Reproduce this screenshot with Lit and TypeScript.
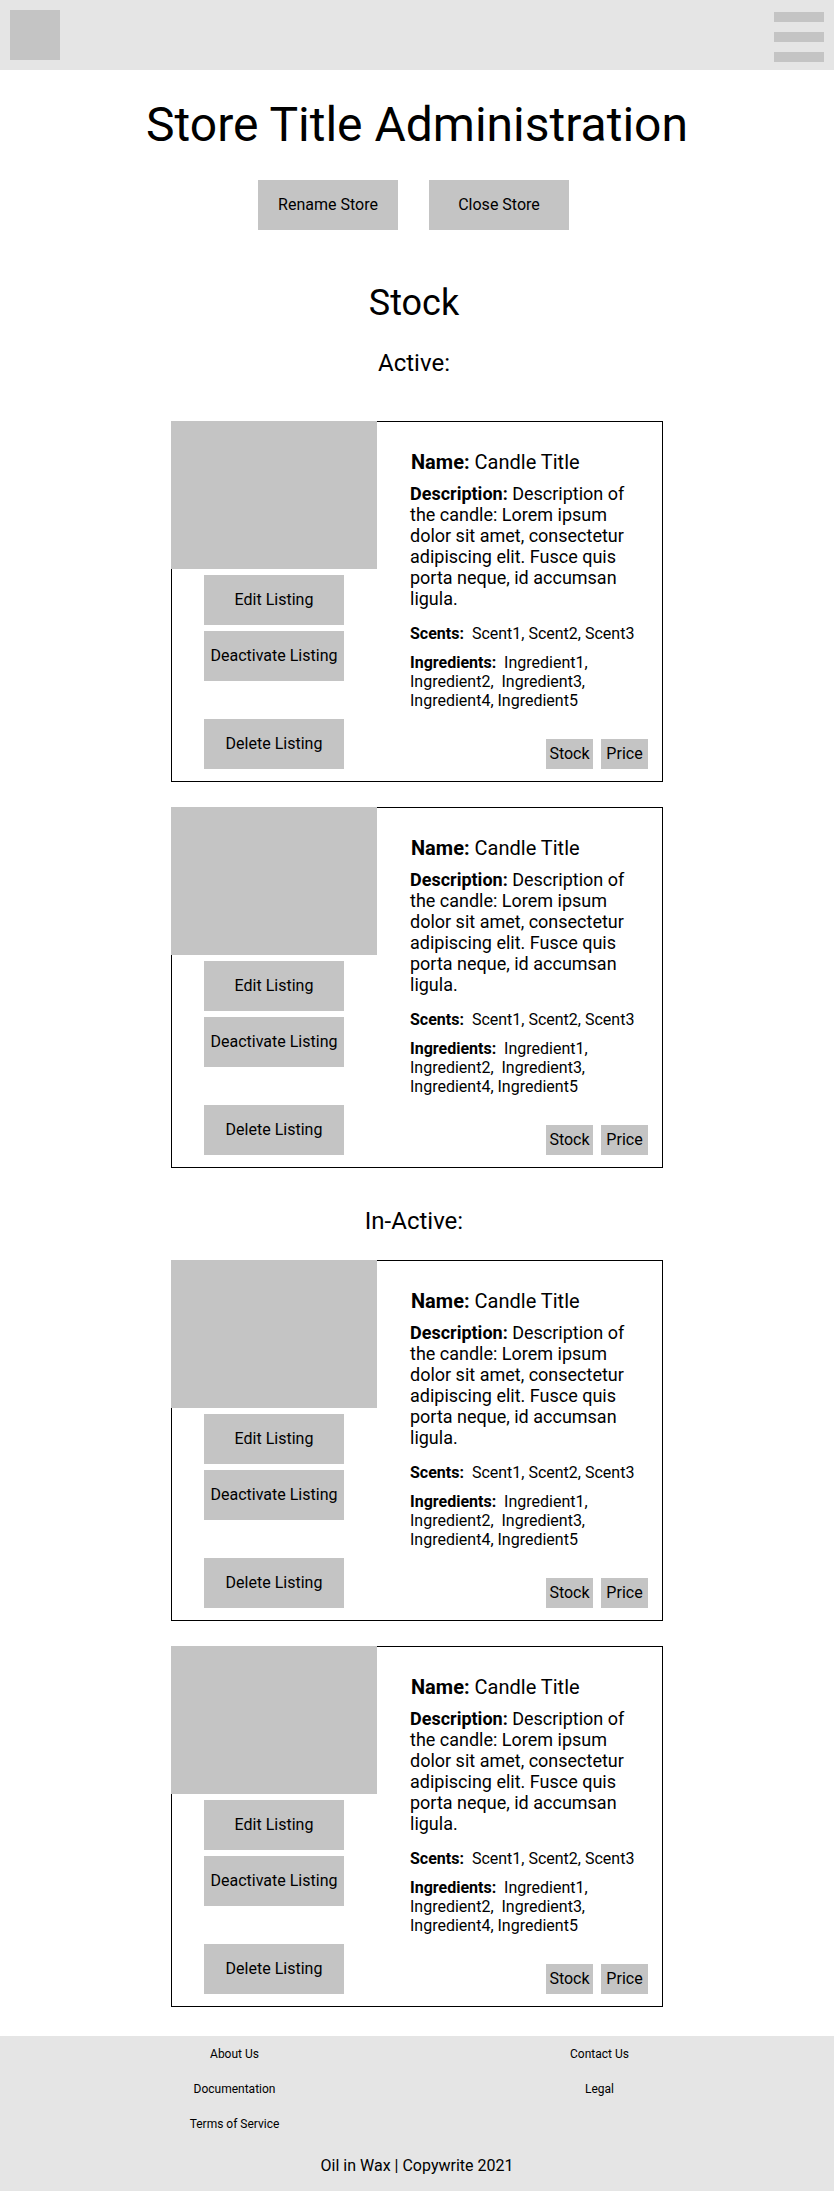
import { LitElement, html, css } from "lit";
import { customElement, property } from "lit/decorators.js";

interface Candle {
  name: string;
  description: string;
  scents: string;
  ingredients: string;
}

const candle: Candle = {
  name: "Candle Title",
  description:
    "Description of the candle: Lorem ipsum dolor sit amet, consectetur adipiscing elit. Fusce quis porta neque, id accumsan ligula.",
  scents: "Scent1, Scent2, Scent3",
  ingredients: "Ingredient1, Ingredient2, \u00a0Ingredient3, Ingredient4, Ingredient5",
};

const activeListings: Candle[] = [candle, candle];
const inactiveListings: Candle[] = [candle, candle];

const buttonStyles = css`
  .button {
    width: 140px;
    height: 50px;
    padding: 0 0 2px;
    border: 0;
    border-radius: 0;
    background: #c4c4c4;
    color: #000;
    font: 16px/19px Roboto, sans-serif;
    white-space: nowrap;
    cursor: pointer;
  }
`;

@customElement("listing-card")
class ListingCard extends LitElement {
  @property({ attribute: false }) candle!: Candle;

  static styles = [
    buttonStyles,
    css`
      :host {
        display: block;
      }
      .card {
        display: grid;
        grid-template-columns: 205px minmax(0, 1fr);
        border: 1px solid #000;
      }
      .side {
        display: flex;
        flex-direction: column;
        align-items: center;
        gap: 6px;
        padding-bottom: 12px;
      }
      .photo {
        align-self: stretch;
        height: 148px;
        margin: -1px 0 0 -1px;
        background: #c4c4c4;
      }
      .side .button {
        margin-right: 1px;
      }
      .side .delete {
        margin-top: 32px;
      }
      .details {
        display: flex;
        flex-direction: column;
        padding: 29px 14px 12px 33px;
      }
      .name,
      .text {
        margin: 0;
        font-weight: 400;
      }
      .name {
        padding-left: 1px;
        font-size: 20px;
        line-height: 23px;
      }
      .description {
        margin-top: 9px;
        font-size: 18px;
        line-height: 21px;
      }
      .scents {
        margin-top: 15px;
      }
      .ingredients {
        margin-top: 10px;
      }
      .tags {
        display: flex;
        justify-content: flex-end;
        gap: 8px;
        margin-top: auto;
      }
      .tag {
        width: 47px;
        line-height: 30px;
        text-align: center;
        background: #c4c4c4;
      }
    `,
  ];

  render() {
    const c = this.candle;
    return html`
      <article class="card">
        <div class="side">
          <div class="photo"></div>
          <button class="button" type="button">Edit Listing</button>
          <button class="button" type="button">Deactivate Listing</button>
          <button class="button delete" type="button">Delete Listing</button>
        </div>
        <div class="details">
          <h4 class="name"><b>Name:</b> ${c.name}</h4>
          <p class="text description"><b>Description:</b> ${c.description}</p>
          <p class="text scents"><b>Scents:</b>&nbsp; ${c.scents}</p>
          <p class="text ingredients"><b>Ingredients:</b>&nbsp; ${c.ingredients}</p>
          <div class="tags">
            <span class="tag">Stock</span>
            <span class="tag">Price</span>
          </div>
        </div>
      </article>
    `;
  }
}

@customElement("app-root")
class AppRoot extends LitElement {
  static styles = [
    buttonStyles,
    css`
      :host {
        display: block;
        background: #fff;
        color: #000;
        font: 16px/19px Roboto, sans-serif;
      }
      .header {
        display: flex;
        justify-content: space-between;
        align-items: center;
        padding: 10px;
        background: #e5e5e5;
      }
      .logo {
        width: 50px;
        height: 50px;
        background: #c4c4c4;
      }
      .menu {
        display: flex;
        flex-direction: column;
        justify-content: flex-end;
        gap: 10px;
        width: 50px;
        height: 54px;
        margin-bottom: -4px;
        padding: 0 0 2px;
        border: 0;
        background: none;
        cursor: pointer;
      }
      .bar {
        height: 10px;
        background: #c4c4c4;
      }
      .title,
      .heading,
      .subheading {
        margin: 0;
        font-weight: 400;
        text-align: center;
      }
      .title {
        padding-top: 27px;
        font-size: 48px;
        line-height: 56px;
      }
      .actions {
        display: flex;
        justify-content: center;
        flex-wrap: wrap;
        gap: 31px;
        padding: 27px 7px 52px 0;
      }
      .heading {
        padding-right: 6px;
        font-size: 36px;
        line-height: 42px;
      }
      .subheading {
        padding: 25px 6px 44px 0;
        font-size: 24px;
        line-height: 28px;
      }
      .inactive {
        padding: 39px 6px 25px 0;
      }
      .list {
        display: grid;
        gap: 25px;
        max-width: 492px;
        margin: 0 auto;
      }
      .footer {
        margin-top: 29px;
        padding: 11px 52px 16px;
        background: #e5e5e5;
        text-align: center;
      }
      .links {
        display: grid;
        grid-template-columns: 1fr 1fr;
      }
      .column {
        display: flex;
        flex-direction: column;
        align-items: center;
        gap: 21px;
      }
      .link {
        color: #000;
        font-size: 12px;
        line-height: 14px;
        text-decoration: none;
      }
      .copyright {
        margin: 25px 0 0;
      }
    `,
  ];

  private list(items: Candle[]) {
    return html`<div class="list">
      ${items.map((c) => html`<listing-card .candle=${c}></listing-card>`)}
    </div>`;
  }

  render() {
    return html`
      <header class="header">
        <div class="logo"></div>
        <button class="menu" type="button" aria-label="Menu">
          <span class="bar"></span><span class="bar"></span><span class="bar"></span>
        </button>
      </header>
      <main>
        <h1 class="title">Store Title Administration</h1>
        <div class="actions">
          <button class="button" type="button">Rename Store</button>
          <button class="button" type="button">Close Store</button>
        </div>
        <h2 class="heading">Stock</h2>
        <h3 class="subheading">Active:</h3>
        ${this.list(activeListings)}
        <h3 class="subheading inactive">In-Active:</h3>
        ${this.list(inactiveListings)}
      </main>
      <footer class="footer">
        <nav class="links">
          <div class="column">
            <a class="link" href="#about">About Us</a>
            <a class="link" href="#documentation">Documentation</a>
            <a class="link" href="#terms">Terms of Service</a>
          </div>
          <div class="column">
            <a class="link" href="#contact">Contact Us</a>
            <a class="link" href="#legal">Legal</a>
          </div>
        </nav>
        <p class="copyright">Oil in Wax | Copywrite 2021</p>
      </footer>
    `;
  }
}
